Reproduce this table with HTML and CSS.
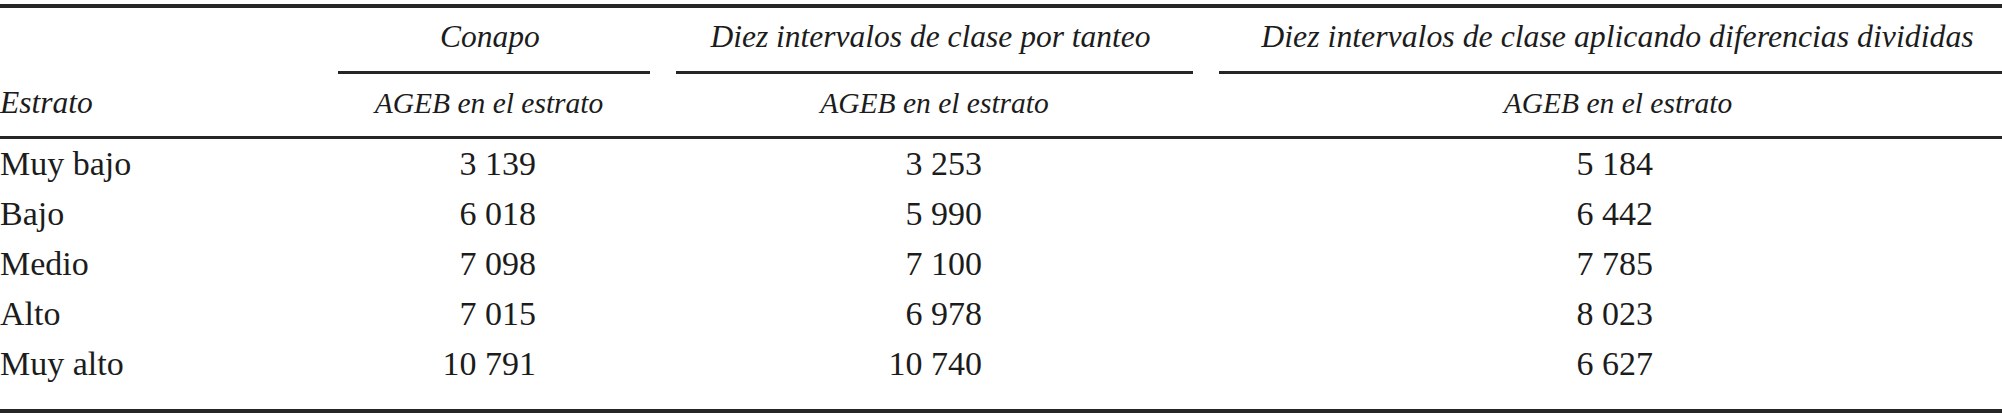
FILE: index.html
```html
<!DOCTYPE html>
<html lang="es">

<head>
    <meta charset="UTF-8">
    <meta name="viewport" content="width=device-width, initial-scale=1.0">
    <title>Estratos</title>
    <link rel="stylesheet" href="styles.css">
</head>

<body>
    <table class="strata">
        <colgroup>
            <col class="c0">
            <col class="c1">
            <col class="c2">
            <col class="c3">
        </colgroup>
        <thead>
            <tr class="groupRow">
                <th></th>
                <th class="group"><div>Conapo</div></th>
                <th class="group"><div>Diez intervalos de clase por tanteo</div></th>
                <th class="group last"><div>Diez intervalos de clase aplicando diferencias divididas</div></th>
            </tr>
            <tr class="subRow">
                <th class="label">Estrato</th>
                <th class="sub first">AGEB en el estrato</th>
                <th class="sub">AGEB en el estrato</th>
                <th class="sub last">AGEB en el estrato</th>
            </tr>
        </thead>
        <tbody>
            <tr>
                <td>Muy bajo</td>
                <td class="n1">3 139</td>
                <td class="n2">3 253</td>
                <td class="n3">5 184</td>
            </tr>
            <tr>
                <td>Bajo</td>
                <td class="n1">6 018</td>
                <td class="n2">5 990</td>
                <td class="n3">6 442</td>
            </tr>
            <tr>
                <td>Medio</td>
                <td class="n1">7 098</td>
                <td class="n2">7 100</td>
                <td class="n3">7 785</td>
            </tr>
            <tr>
                <td>Alto</td>
                <td class="n1">7 015</td>
                <td class="n2">6 978</td>
                <td class="n3">8 023</td>
            </tr>
            <tr class="lastRow">
                <td>Muy alto</td>
                <td class="n1">10 791</td>
                <td class="n2">10 740</td>
                <td class="n3">6 627</td>
            </tr>
        </tbody>
    </table>
</body>

</html>
```

FILE: styles.css
```css
body {
    margin: 0;
    padding-top: 4px;
    background-color: #fff;
    color: #1c1c1c;
}

.strata {
    width: 2002px;
    border-collapse: collapse;
    table-layout: fixed;
    border-top: 4px solid #262626;
    border-bottom: 4px solid #262626;
    font-family: "Liberation Serif", "DejaVu Serif", serif;
}

.c0 {
    width: 325px;
}

.c1 {
    width: 338px;
}

.c2 {
    width: 543px;
}

.c3 {
    width: 796px;
}

th {
    padding: 0;
    font-weight: normal;
    font-style: italic;
}

.groupRow th {
    height: 66px;
    vertical-align: top;
}

.group {
    padding: 0 13px;
    font-size: 31.5px;
}

.group.last {
    padding-right: 0;
    font-size: 31.8px;
}

.group>div {
    height: 66px;
    line-height: 58px;
    padding-right: 8px;
    border-bottom: 3px solid #262626;
    box-sizing: border-box;
}

.group.last>div {
    padding-right: 0;
    padding-left: 14px;
}

.subRow th {
    height: 62px;
    line-height: 58px;
    vertical-align: top;
    border-bottom: 3px solid #262626;
}

.label {
    text-align: left;
    font-size: 31.5px;
}

.sub {
    font-size: 29.5px;
}

.sub.first {
    padding-right: 10px;
}

.sub.last {
    padding-left: 28px;
}

td {
    height: 50px;
    line-height: 50px;
    padding: 0;
    font-size: 34px;
    white-space: nowrap;
}

.lastRow td {
    height: 70px;
    vertical-align: top;
}

.n1,
.n2,
.n3 {
    text-align: right;
}

.n1 {
    padding-right: 127px;
}

.n2 {
    padding-right: 224px;
}

.n3 {
    padding-right: 349px;
}
```
